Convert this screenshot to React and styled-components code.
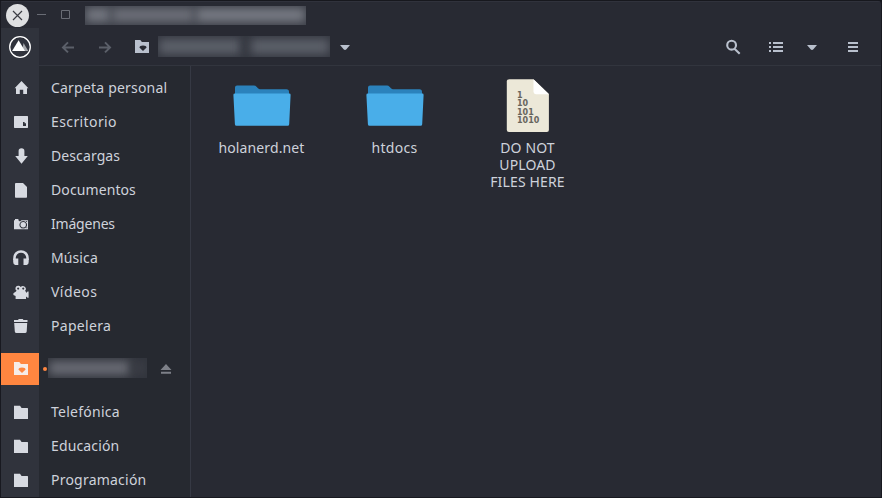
import React from "react";
import styled, { createGlobalStyle } from "styled-components";

const Global = createGlobalStyle`
  * { box-sizing: border-box; }
  body { margin: 0; background: #15161c; overflow: hidden; }
`;

const Window = styled.div`
  display: flex;
  flex-direction: column;
  width: 882px;
  height: 498px;
  border: 1px solid #181920;
  border-top-color: #17181e;
  border-radius: 2px 4px 0 0;
  background: #282a33;
  color: #ced2db;
  font-family: "Noto Sans", "Open Sans", sans-serif;
  font-size: 14px;
  overflow: hidden;
`;

const TitleBar = styled.header`
  display: flex;
  align-items: center;
  flex: 0 0 27px;
  padding-left: 5px;
  border-top: 1px solid #30323c;
`;

const CloseButton = styled.button`
  width: 23px;
  height: 23px;
  padding: 0;
  border: 0;
  border-radius: 50%;
  background: #dedfe1;
  color: #3a3c43;
  svg { display: block; }
`;

const WindowButton = styled.button`
  display: flex;
  width: 10px;
  height: 10px;
  margin-left: ${(p) => p.$gap}px;
  padding: 0;
  border: 0;
  background: none;
  color: #696c75;
`;

const Redacted = styled.div`
  flex: none;
  display: flex;
  align-items: center;
  width: ${(p) => p.$width}px;
  height: ${(p) => p.$height}px;
  margin-left: ${(p) => p.$gap}px;
  overflow: hidden;
  background: ${(p) => p.$base};
`;

const Smudge = styled.span`
  flex: ${(p) => p.$grow};
  height: 70%;
  margin: 0 1px;
  background: ${(p) => p.$tone};
  filter: blur(5px);
`;

const Toolbar = styled.div`
  display: flex;
  flex: 0 0 38px;
`;

const LogoCell = styled.div`
  display: flex;
  align-items: center;
  justify-content: center;
  width: 38px;
  background: #30333c;
`;

const ToolbarContent = styled.div`
  display: flex;
  align-items: center;
  flex: 1;
  padding: 0 20px 0 21px;
  border-bottom: 1px solid #32353e;
`;

const ToolButton = styled.button`
  display: flex;
  width: 16px;
  height: 16px;
  margin-left: ${(p) => p.$gap || 0}px;
  padding: 0;
  border: 0;
  background: none;
  color: ${(p) => (p.$dim ? "#5b5f69" : "#b9c0cd")};
`;

const Spacer = styled.div`
  flex: 1;
`;

const Body = styled.div`
  display: flex;
  flex: 1;
  min-height: 0;
`;

const Sidebar = styled.nav`
  width: 190px;
  padding-top: 5px;
  border-right: 1px solid #363944;
  background: linear-gradient(to right, #30333c 38px, #262930 38px);
`;

const Place = styled.div`
  display: flex;
  align-items: center;
  height: 34px;
`;

const MountedPlace = styled(Place)`
  height: 32px;
  margin: 10px 0;
`;

const IconCell = styled.div`
  display: flex;
  align-items: center;
  width: 38px;
  height: 100%;
  padding-left: 12px;
  color: ${(p) => (p.$active ? "#f6ece8" : "#d7dae1")};
  background: ${(p) => (p.$active ? "#ff8640" : "transparent")};
`;

const PlaceLabel = styled.span`
  padding: 0 0 2px 12px;
  letter-spacing: ${(p) => p.$track}px;
  white-space: nowrap;
`;

const ActiveDot = styled.i`
  width: 4px;
  height: 4px;
  margin-left: 4px;
  border-radius: 50%;
  background: #ff8640;
`;

const MountedName = styled.div`
  padding-bottom: 2px;
`;

const Eject = styled.button`
  display: flex;
  margin-left: 13px;
  padding: 0;
  border: 0;
  background: none;
  color: #7d8088;
`;

const Files = styled.main`
  display: flex;
  align-items: flex-start;
  flex: 1;
  padding: 13px 0 0 4px;
`;

const FileItem = styled.figure`
  display: flex;
  flex-direction: column;
  align-items: center;
  width: 133px;
  margin: 0;
`;

const FileName = styled.figcaption`
  width: ${(p) => p.$width || 133}px;
  margin-top: 6px;
  line-height: 17px;
  text-align: center;
  letter-spacing: ${(p) => p.$track}px;
`;

const Icon = ({ children, size = 16 }) => (
  <svg width={size} height={size} viewBox={`0 0 ${size} ${size}`} fill="currentColor">
    {children}
  </svg>
);

const HomeIcon = () => <Icon><path d="M8.5 1 15.4 8.3H14V14H10.2V9.7H6.8V14H3V8.3H1.6z" /></Icon>;
const DesktopIcon = () => (
  <Icon><path fillRule="evenodd" d="M1.5 2h13l.5.5v11l-.5.5h-13l-.5-.5v-11zM10 8v4h3V9.2h-1.4V8z" /></Icon>
);
const DownloadIcon = () => <Icon><path d="M5.6 8V3Q5.6.2 8.5.2T11.4 3V8h3.4L8.5 15.8 2.2 8z" /></Icon>;
const DocumentIcon = () => (
  <Icon><path d="M3 1h7l4 4v10q0 .8-.8.8H2.8q-.8 0-.8-.8V1.8Q2 1 3 1z" /></Icon>
);
const CameraIcon = () => (
  <Icon>
    <path fillRule="evenodd" d="M1 4.2h1V3h3.4v1.2L7 5.4 8.5 4.2H15v9.1H1zM10.2 5a3.8 3.8 0 1 0 .1 0z" />
    <circle cx="10.2" cy="8.8" r="2.7" />
    <path d="M13.2 5h.9v1h-.9zM13.4 11.3h.8v1h-.8z" fill="#30333c" />
  </Icon>
);
const HeadphonesIcon = () => (
  <Icon>
    <path d="M1.5 10V7.7a6.5 6.3 0 0 1 13 0V10" fill="none" stroke="currentColor" strokeWidth="2.5" />
    <path d="M.2 8.6H5.3V15H2.2Q.2 14.6.2 12zM10.5 8.6h5.2V12q0 2.6-2 3h-3.2z" />
  </Icon>
);
const VideoIcon = () => (
  <Icon>
    <path fillRule="evenodd" d="M5 1.7a2.8 2.8 0 0 1 2.7 1.4 2.8 2.8 0 1 1 4.4 3.7l.9 1.1V9l1.6-1.4h1v6.2h-1L13 12.6V15H2.6v-3L.4 11V9.2l2.2-1.4 1-1A2.8 2.8 0 0 1 5 1.7zM5.1 3.4a1 1 0 1 0 .1 0zM10.2 3.4a1 1 0 1 0 .1 0z" />
  </Icon>
);
const TrashIcon = () => (
  <Icon><path d="M1 2h4l.8-1h3.9l.8 1h4v2H1zM1.2 5h13l-.5 8.4Q13.5 15 12 15H3.5Q2 15 1.8 13.4z" /></Icon>
);
const FolderIcon = () => <Icon><path d="M1 1.8h6l1.6 2.1H14.4q.6 0 .6.6V15H1z" /></Icon>;
const RemoteFolderIcon = ({ cut }) => (
  <Icon>
    <path d="M1 1h5.3l1.6 2H15v11H1z" />
    <path d="M5.4 8.6Q5.6 6.6 9 6.6T12.6 8.6L9 12z" fill={cut} />
  </Icon>
);

const CaretIcon = () => <Icon><path d="M3 6h10l-3.6 4.3q-1.4 1.2-2.8 0z" /></Icon>;

const BackIcon = () => (
  <Icon><path d="M14 8.4H3M8 3.4 3 8.4l5 5" fill="none" stroke="currentColor" strokeWidth="2" /></Icon>
);
const ForwardIcon = () => (
  <Icon><path d="M2 8.4h11M8 3.4l5 5-5 5" fill="none" stroke="currentColor" strokeWidth="2" /></Icon>
);
const SearchIcon = () => (
  <Icon><path d="m9.5 9.8 5.2 5M11 6.2a4.4 4.4 0 1 1-8.8 0 4.4 4.4 0 0 1 8.8 0z" fill="none" stroke="currentColor" strokeWidth="2.1" /></Icon>
);
const ListIcon = () => (
  <Icon><path d="M1 3h2v2H1zM5 3h10v2H5zM1 7h2v2H1zM5 7h10v2H5zM1 11h2v2H1zM5 11h10v2H5z" /></Icon>
);
const MenuIcon = () => <Icon><path d="M3 3h10v2H3zM3 7h10v2H3zM3 11h10v2H3z" /></Icon>;

const LogoIcon = () => (
  <svg width="24" height="24" viewBox="0 0 24 24">
    <circle cx="12" cy="12" r="10.3" fill="none" stroke="#fff" strokeWidth="1.3" />
    <path d="M15.5 8 20.3 16H14z" fill="#a5a7ab" />
    <path d="M10.6 5.2 17 16H4.1z" fill="#fff" />
  </svg>
);

const BlueFolder = () => (
  <svg width="60" height="54" viewBox="0 0 60 54">
    <path d="M3 8.5q0-2 2-2H22q1.5 0 2.5 1.2l1.5 1.6q1 1 2 1H54.5q2.5 0 2.5 2.5V26H3z" fill="#2b82bc" />
    <path d="M3 14.5H57.3q1.4 0 1.3 1.4L57.2 45.2q-.1 1.5-1.6 1.5H4.5Q3 46.7 2.9 45.2L1.4 15.9Q1.3 14.5 3 14.5z" fill="#49aee9" />
  </svg>
);

const BinaryText = styled.text`
  font: bold 8px "DejaVu Sans", sans-serif;
  fill: #67655d;
`;

const BinaryFile = () => (
  <svg width="60" height="54" viewBox="0 0 60 54">
    <path d="M11.5 0.2H35.5L50.9 15V51q0 2-2 2H11q-2.2 0-2.2-2V2.6Q8.8 .2 11.5 .2z" fill="#ece8d8" />
    <path d="M35.5 .2 50.9 15.2H37.9Q35.5 15.2 35.5 12.8z" fill="#fff" />
    <BinaryText x="19" y="18.5">1</BinaryText>
    <BinaryText x="19" y="26.8">10</BinaryText>
    <BinaryText x="19" y="35.8">101</BinaryText>
    <BinaryText x="19" y="44">1010</BinaryText>
  </svg>
);

const places = [
  { name: "Carpeta personal", icon: HomeIcon, track: 0.2 },
  { name: "Escritorio", icon: DesktopIcon, track: 0.4 },
  { name: "Descargas", icon: DownloadIcon, track: 0.1 },
  { name: "Documentos", icon: DocumentIcon, track: 0.1 },
  { name: "Imágenes", icon: CameraIcon, track: -0.2 },
  { name: "Música", icon: HeadphonesIcon, track: 0.1 },
  { name: "Vídeos", icon: VideoIcon, track: 0.45 },
  { name: "Papelera", icon: TrashIcon, track: 0.3 },
];

const bookmarks = [
  { name: "Telefónica", icon: FolderIcon, track: 0.25 },
  { name: "Educación", icon: FolderIcon, track: 0.15 },
  { name: "Programación", icon: FolderIcon, track: 0.22 },
];

const files = [
  { name: "holanerd.net", art: BlueFolder, track: 0.12 },
  { name: "htdocs", art: BlueFolder, track: 0.3 },
  { name: "DO NOT UPLOAD FILES HERE", art: BinaryFile, track: 0.15, width: 88 },
];

const PlaceRow = ({ name, icon: Glyph, track }) => (
  <Place>
    <IconCell><Glyph /></IconCell>
    <PlaceLabel $track={track}>{name}</PlaceLabel>
  </Place>
);

export default function App() {
  return (
    <>
      <Global />
      <Window>
        <TitleBar>
          <CloseButton aria-label="Cerrar">
            <Icon size={23}><path d="m7 7 9 9m0-9-9 9" stroke="currentColor" strokeWidth="1.2" /></Icon>
          </CloseButton>
          <WindowButton aria-label="Minimizar" $gap={8}>
            <Icon size={10}><path d="M0 4h9v1H0z" /></Icon>
          </WindowButton>
          <WindowButton aria-label="Maximizar" $gap={14}>
            <Icon size={10}><path d="M.5 0.5h8v8h-8z" fill="none" stroke="currentColor" /></Icon>
          </WindowButton>
          <Redacted $width={221} $height={19} $gap={14} $base="#3b3e47">
            <Smudge $grow={24} $tone="#747780" />
            <Smudge $grow={82} $tone="#6c6f78" />
            <Smudge $grow={110} $tone="#777a83" />
          </Redacted>
        </TitleBar>
        <Toolbar>
          <LogoCell><LogoIcon /></LogoCell>
          <ToolbarContent>
            <ToolButton aria-label="Atrás" $dim><BackIcon /></ToolButton>
            <ToolButton aria-label="Adelante" $dim $gap={21}><ForwardIcon /></ToolButton>
            <ToolButton aria-label="Carpeta remota" $gap={21}><RemoteFolderIcon cut="#282a33" /></ToolButton>
            <Redacted $width={172} $height={21} $gap={8} $base="#343740">
              <Smudge $grow={80} $tone="#5c6069" />
              <Smudge $grow={5} $tone="#343740" />
              <Smudge $grow={76} $tone="#5c6069" />
            </Redacted>
            <ToolButton aria-label="Ruta" $gap={7}><CaretIcon /></ToolButton>
            <Spacer />
            <ToolButton aria-label="Buscar"><SearchIcon /></ToolButton>
            <ToolButton aria-label="Lista" $gap={27}><ListIcon /></ToolButton>
            <ToolButton aria-label="Opciones de vista" $gap={20}><CaretIcon /></ToolButton>
            <ToolButton aria-label="Menú" $gap={25}><MenuIcon /></ToolButton>
          </ToolbarContent>
        </Toolbar>
        <Body>
          <Sidebar>
            {places.map((p) => <PlaceRow key={p.name} {...p} />)}
            <MountedPlace>
              <IconCell $active><RemoteFolderIcon cut="#ff8640" /></IconCell>
              <ActiveDot />
              <MountedName>
                <Redacted $width={99} $height={20} $gap={1} $base="#31343c">
                  <Smudge $grow={78} $tone="#686a73" />
                  <Smudge $grow={14} $tone="#3a3d45" />
                </Redacted>
              </MountedName>
              <Eject aria-label="Expulsar">
                <Icon size={12}><path d="M6 1 11.5 7H.5zM1 8.7h10v2H1z" /></Icon>
              </Eject>
            </MountedPlace>
            {bookmarks.map((p) => <PlaceRow key={p.name} {...p} />)}
          </Sidebar>
          <Files>
            {files.map(({ name, art: Art, track, width }) => (
              <FileItem key={name}>
                <Art />
                <FileName $track={track} $width={width}>{name}</FileName>
              </FileItem>
            ))}
          </Files>
        </Body>
      </Window>
    </>
  );
}
